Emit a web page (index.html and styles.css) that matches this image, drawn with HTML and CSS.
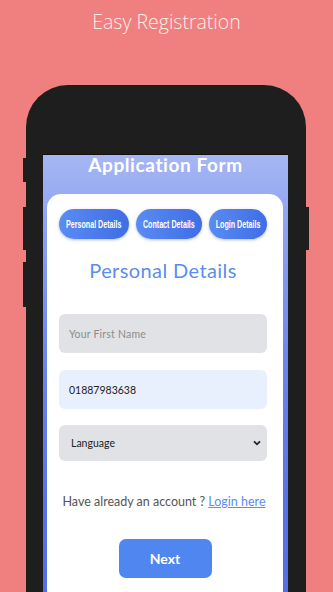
FILE: index.html
```html
<!DOCTYPE html>
<html>
<head>
<meta charset="utf-8">
<link rel="stylesheet" href="styles.css">
</head>
<body>
<div class="page">
  <h1 class="promo-title">Easy Registration</h1>
  <div class="phone">
    <span class="btn btn-l1"></span>
    <span class="btn btn-l2"></span>
    <span class="btn btn-l3"></span>
    <span class="btn btn-r1"></span>
    <div class="screen">
      <h2 class="app-title">Application Form</h2>
      <div class="card">
        <div class="tabs">
          <span class="tab tab-1"><span class="tab-text">Personal Details</span></span>
          <span class="tab tab-2"><span class="tab-text">Contact Details</span></span>
          <span class="tab tab-3"><span class="tab-text">Login Details</span></span>
        </div>
        <h3 class="section-title">Personal Details</h3>
        <div class="form">
          <div class="field field-gray"><span class="placeholder">Your First Name</span></div>
          <div class="field field-blue"><span class="value">01887983638</span></div>
          <div class="field field-select">
            <span class="value">Language</span>
            <svg class="chev" width="8" height="6" viewBox="0 0 8 6"><path d="M1 1.3 L4 4.3 L7 1.3" fill="none" stroke="#222" stroke-width="1.8"/></svg>
          </div>
        </div>
        <p class="login-line">Have already an account ? <a class="login-link">Login here</a></p>
        <div class="actions"><span class="next">Next</span></div>
      </div>
    </div>
  </div>
</div>
</body>
</html>
```
FILE: styles.css
```css
html, body {
  margin: 0;
  padding: 0;
  height: 592px;
  overflow: hidden;
  background: #f08080;
}
.page {
  width: 333px;
  height: 592px;
  display: flex;
  flex-direction: column;
  align-items: flex-start;
}
.page > *, .screen > *, .card > * { flex-shrink: 0; }
.promo-title {
  margin: 0;
  align-self: stretch;
  height: 85px;
  padding-top: 8px;
  box-sizing: border-box;
  text-align: center;
  font-family: "Open Sans", sans-serif;
  font-weight: 300;
  font-size: 19.5px;
  line-height: 27px;
  color: #fdeeea;
}
.phone {
  position: relative;
  margin-left: 26px;
  width: 280px;
  height: 600px;
  background: #1e1e1e;
  border-radius: 42px 42px 0 0;
  padding: 69px 18px 0 17px;
  box-sizing: border-box;
}
.btn {
  position: absolute;
  background: #1e1e1e;
  width: 3px;
}
.btn-l1 { left: -3px; top: 73px; height: 24px; }
.btn-l2 { left: -3px; top: 122px; height: 43px; }
.btn-l3 { left: -3px; top: 177px; height: 45px; }
.btn-r1 { right: -3px; top: 122px; height: 43px; }
.screen {
  height: 600px;
  overflow: hidden;
  background: linear-gradient(180deg, #a6b6f4 0%, #8ea2f0 12%, #6a84ea 35%, #5471e6 60%, #4e6ce6 100%);
  border-top: 1px solid #111;
  display: flex;
  flex-direction: column;
}
.app-title {
  margin: -8px 0 0;
  height: 47px;
  text-align: center;
  font-family: Lato, sans-serif;
  font-weight: 700;
  font-size: 19px;
  line-height: 36px;
  letter-spacing: 0.6px;
  color: #ffffff;
}
.card {
  margin: 0 5px 0 4px;
  height: 395px;
  background: #ffffff;
  border-radius: 14px;
  padding: 15px 16px 0 12px;
  display: flex;
  flex-direction: column;
}
.tabs {
  display: flex;
  gap: 7px;
  height: 30px;
}
.tab {
  height: 30px;
  border-radius: 15px;
  background: linear-gradient(90deg, #5a8cf2, #3f6de6);
  box-shadow: 0 1px 3px rgba(40, 70, 160, 0.35);
  display: flex;
  align-items: center;
  justify-content: center;
  overflow: hidden;
}
.tab-text {
  white-space: nowrap;
  color: #fff;
  font-family: "Liberation Sans", sans-serif;
  font-weight: 700;
  font-size: 11.5px;
  transform: scaleX(0.62);
}
.tab-1 { width: 70px; }
.tab-2 { width: 66px; }
.tab-3 { width: 58px; }
.section-title {
  margin: 18px 0 0;
  height: 26px;
  text-align: center;
  font-family: Lato, sans-serif;
  font-weight: 400;
  font-size: 20px;
  line-height: 26px;
  letter-spacing: 0.4px;
  color: #5b8def;
}
.form {
  margin-top: 31px;
  display: flex;
  flex-direction: column;
  gap: 17px;
}
.field {
  height: 39px;
  border-radius: 6px;
  display: flex;
  align-items: center;
  padding: 0 10px;
  font-family: Lato, sans-serif;
  font-size: 10.5px;
}
.field-gray { background: #e1e2e5; }
.field-blue { background: #e8effd; }
.field-select {
  height: 36px;
  margin-top: -1px;
  background: #e1e2e5;
  justify-content: space-between;
  padding: 0 6px 0 12px;
}
.placeholder { color: #8c8c8c; letter-spacing: 0.2px; }
.value { color: #222; }
.login-line {
  margin: 33px 0 0;
  text-align: center;
  font-family: Lato, sans-serif;
  font-size: 12.5px;
  line-height: 16px;
  color: #555;
  padding-left: 2px;
}
.login-link {
  color: #5b8def;
  text-decoration: underline;
}
.actions {
  margin-top: 29px;
  display: flex;
  justify-content: center;
  padding-left: 4px;
}
.next {
  width: 93px;
  height: 39px;
  border-radius: 7px;
  background: #4f86f0;
  color: #fff;
  font-family: Lato, sans-serif;
  font-weight: 700;
  font-size: 14px;
  display: flex;
  align-items: center;
  justify-content: center;
}
```
